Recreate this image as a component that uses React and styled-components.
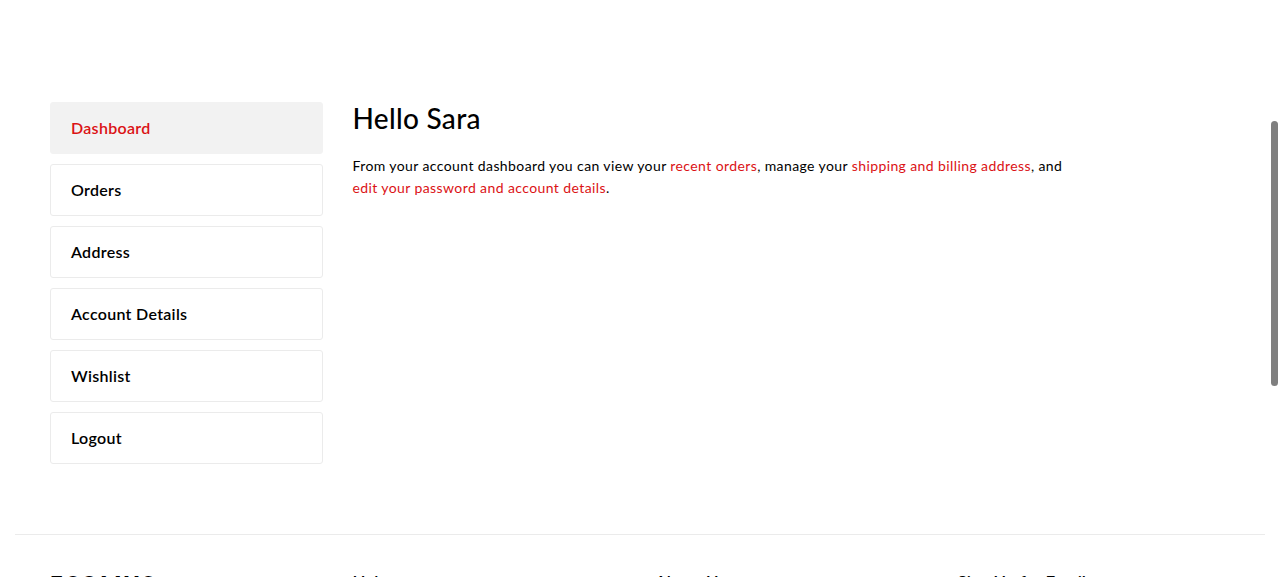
import React from "react";
import styled, { createGlobalStyle } from "styled-components";

const Global = createGlobalStyle`
  html, body { margin: 0; padding: 0; overflow: hidden; background: #fff; }
  body { font-family: "Lato", "Liberation Sans", sans-serif; color: #000; }
  * { box-sizing: border-box; }
`;

const Page = styled.div`
  width: 100%;
`;

const Section = styled.section`
  padding: 102px 50px 70px;
  display: grid;
  grid-template-columns: repeat(4, 1fr);
  column-gap: 30px;
`;

const Sidebar = styled.nav`
  display: flex;
  flex-direction: column;
  gap: 10px;
`;

const NavItem = styled.a`
  display: flex;
  align-items: center;
  height: 52px;
  padding: 0 20px 2px;
  border: 1px solid ${(p) => (p.$active ? "#f2f2f2" : "#ebebeb")};
  background: ${(p) => (p.$active ? "#f2f2f2" : "#fff")};
  border-radius: 3px;
  font-size: 16px;
  letter-spacing: 0.3px;
  font-weight: 600;
  color: ${(p) => (p.$active ? "#db1215" : "#000")};
  text-decoration: none;
  cursor: pointer;
`;

const Main = styled.div`
  grid-column: span 3;
`;

const Title = styled.h5`
  margin: 0 0 20px;
  font-size: 28px;
  line-height: 33px;
  font-weight: 500;
  letter-spacing: 0.3px;
`;

const Text = styled.p`
  margin: 0;
  max-width: 725px;
  font-size: 14px;
  line-height: 22px;
  letter-spacing: 0.4px;
  color: #000;
`;

const Link = styled.a`
  color: #db1215;
  text-decoration: none;
`;

const Divider = styled.hr`
  margin: 0 15px;
  border: 0;
  border-top: 1px solid #ebebeb;
`;

const Footer = styled.footer`
  padding: 39px 50px 40px;
  display: grid;
  grid-template-columns: repeat(4, 1fr);
  column-gap: 30px;
`;

const Logo = styled.div`
  font-size: 22px;
  font-weight: 800;
  letter-spacing: 2px;
  line-height: 1;
`;

const FooterHeading = styled.h6`
  margin: 0;
  font-size: 17px;
  font-weight: 600;
  line-height: 1;
`;

const ScrollThumb = styled.div`
  position: fixed;
  top: 121px;
  right: 2px;
  width: 7px;
  height: 265px;
  border-radius: 4px;
  background: #7f7f7f;
`;

const items = ["Dashboard", "Orders", "Address", "Account Details", "Wishlist", "Logout"];

export default function App() {
  return (
    <Page>
      <Global />
      <Section>
        <Sidebar>
          {items.map((it, i) => (
            <NavItem key={it} $active={i === 0}>
              {it}
            </NavItem>
          ))}
        </Sidebar>
        <Main>
          <Title>Hello Sara</Title>
          <Text>
            From your account dashboard you can view your <Link>recent orders</Link>, manage your{" "}
            <Link>shipping and billing address</Link>, and{" "}
            <Link>edit your password and account details</Link>.
          </Text>
        </Main>
      </Section>
      <Divider />
      <Footer>
        <Logo>ECOMUS</Logo>
        <FooterHeading>Help</FooterHeading>
        <FooterHeading>About Us</FooterHeading>
        <FooterHeading>Sign Up for Email</FooterHeading>
      </Footer>
      <ScrollThumb />
    </Page>
  );
}
